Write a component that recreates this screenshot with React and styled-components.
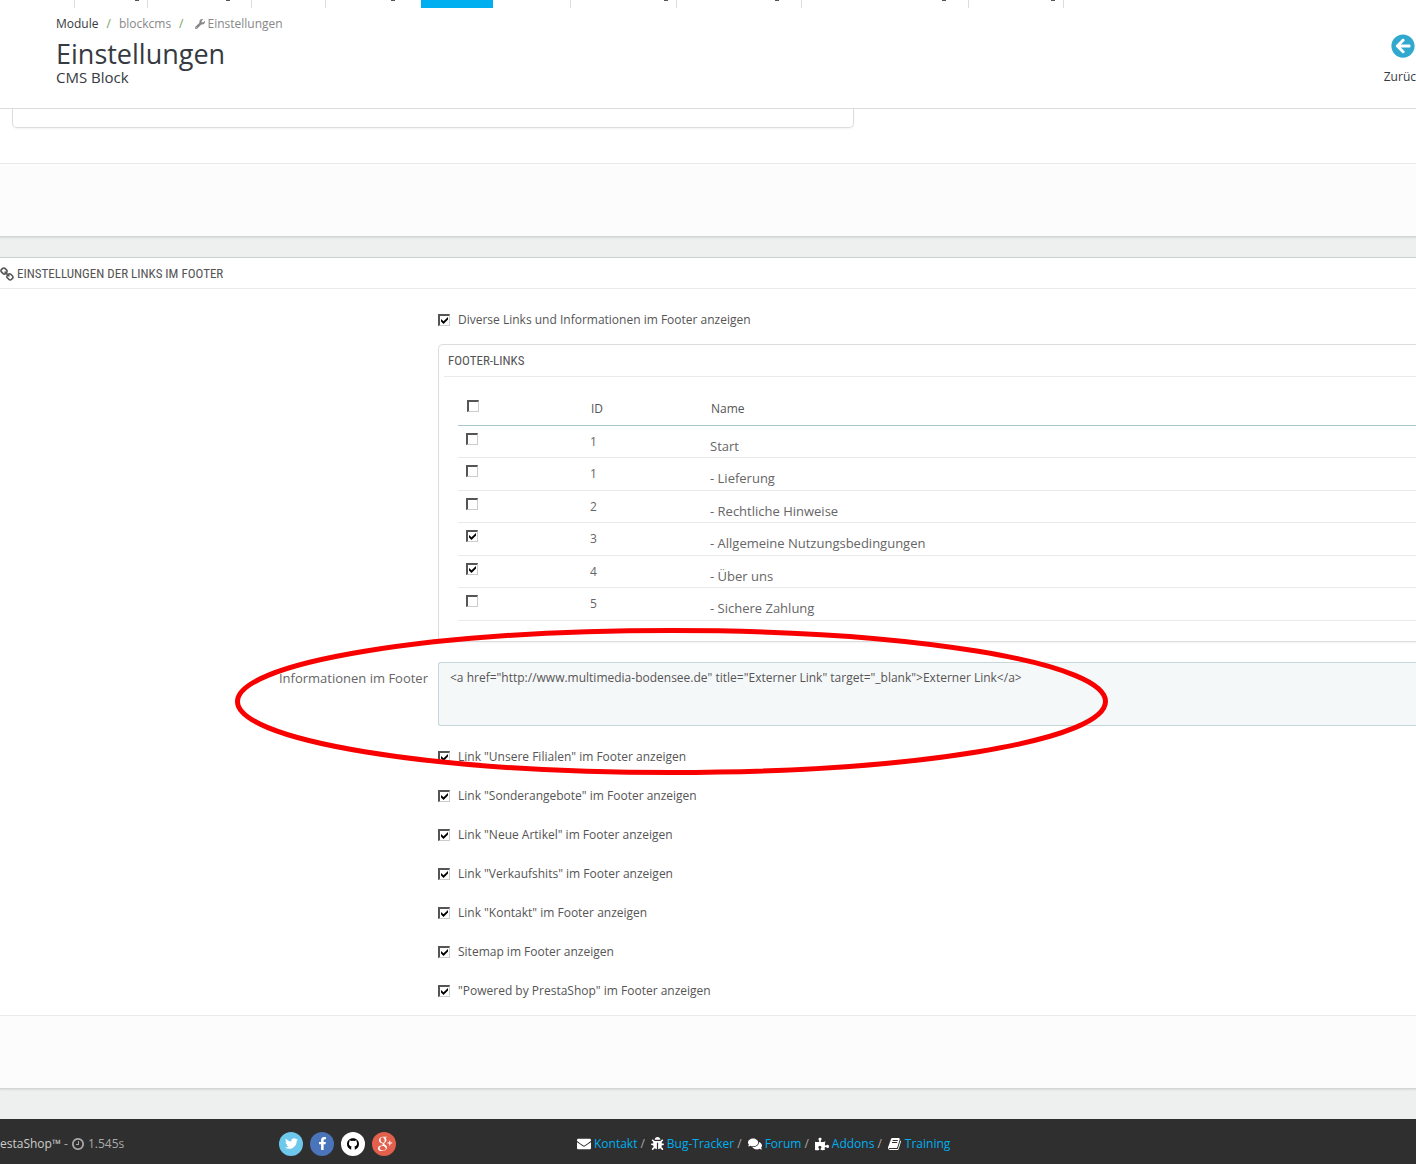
import { useState } from "react";
import styled, { createGlobalStyle } from "styled-components";
import { FaArrowCircleLeft, FaBug, FaComments, FaEnvelope, FaFacebookF, FaPuzzlePiece, FaTwitter, FaWrench } from "react-icons/fa";
import { TiSocialGooglePlus } from "react-icons/ti";

const GlobalStyle = createGlobalStyle`
    * {
        box-sizing: border-box;
    }
    body {
        margin: 0;
        background: #edf0ef;
        color: #555;
        font-family: "Open Sans", "Noto Sans", sans-serif;
        font-size: 12px;
        line-height: 18px;
    }
    a {
        text-decoration: none;
    }
`

const Page = styled.div`
    min-height: 100vh;
    overflow: hidden;
    display: flex;
    flex-direction: column;
`

const Nav = styled.nav`
    display: flex;
    height: 8px;
    background: #fff;
`

const Tab = styled.a`
    display: flex;
    justify-content: flex-end;
    width: ${props => props.$width}px;
    padding-right: ${props => props.$tail}px;
    border-right: ${props => props.$line ? "1px solid #ddd" : "none"};
    background: ${props => props.$active ? "#00aff0" : "#fff"};
    &::after {
        content: "";
        width: 4px;
        height: 1px;
        background: ${props => props.$tail ? "#555" : "transparent"};
    }
`

const Header = styled.header`
    display: flex;
    justify-content: space-between;
    height: 101px;
    padding: 7px 0 0 56px;
    background: #fff;
    border-bottom: 1px solid #ddd;
    color: #363a41;
`

const Breadcrumb = styled.div`
    display: flex;
    align-items: center;
    gap: 8px;
    a {
        display: flex;
        align-items: center;
        gap: 3px;
        color: #888;
    }
    a:first-child {
        color: #363a41;
    }
    a:last-child {
        padding-left: 3px;
    }
    span {
        color: #72a352;
    }
`

const Title = styled.h1`
    margin: 6px 0 0;
    font-size: 27px;
    font-weight: 400;
    line-height: 30px;
`

const SubTitle = styled.h2`
    margin: 0;
    font-size: 15px;
    font-weight: 400;
    line-height: 16px;
`

const BackButton = styled.button`
    display: flex;
    flex-direction: column;
    align-items: flex-end;
    gap: 10px;
    padding: 19px 0 0;
    border: 0;
    background: none;
    color: #363a41;
    font: inherit;
    svg {
        color: #31a9cf;
        margin-right: 1px;
    }
`

const Panel = styled.section`
    background: #fff;
    border-bottom: 1px solid #d0d6d5;
    box-shadow: 0 1px 2px #00000018;
`

const PanelEnd = styled.div`
    height: 73px;
    background: #fcfcfc;
    border-top: 1px solid #eaeaea;
`

const BlockBottom = styled.div`
    width: 842px;
    max-width: 100%;
    height: 19px;
    margin: 0 0 35px 12px;
    border: 1px solid #ddd;
    border-top: 0;
    border-radius: 0 0 5px 5px;
    box-shadow: 0 1px 2px #0000000d;
`

const PanelTitle = styled.h3`
    display: flex;
    align-items: center;
    gap: 2px;
    height: 31px;
    margin: 0;
    padding: 2px 0 0;
    border-bottom: 1px solid #eaeaea;
    font-family: "Ubuntu Condensed", "Roboto Condensed", "Liberation Sans Narrow", sans-serif;
    font-size: 13px;
    font-weight: 400;
    text-transform: uppercase;
`

const LinkPanel = styled(Panel)`
    margin-top: 20px;
    border-top: 1px solid #ccd0d0;
`

const Form = styled.form`
    padding: 22px 0 15px;
`

const Field = styled.div`
    position: relative;
    display: grid;
    grid-template-columns: 428px 1fr;
    column-gap: 10px;
    margin-bottom: 22px;
`

const FieldLabel = styled.label`
    padding-top: 7px;
    font-size: 13px;
    text-align: right;
    color: #666;
`

const CheckList = styled.div`
    display: flex;
    flex-direction: column;
    align-items: flex-start;
    gap: 21px;
    padding-left: 438px;
`

const CheckLabel = styled.label`
    display: flex;
    align-items: center;
    gap: 8px;
`

const Check = styled.input.attrs({ type: "checkbox" })`
    appearance: none;
    display: block;
    width: 12px;
    height: 12px;
    margin: 0;
    background: #fff;
    border: solid;
    border-width: 2px 1px 1px 2px;
    border-color: #555 #ccc #ccc #555;
    &:checked::before {
        content: "";
        display: block;
        width: 7px;
        height: 7px;
        margin: 1px;
        background: #000;
        clip-path: polygon(0 29%, 0 64%, 36% 100%, 100% 36%, 100% 0, 36% 60%);
    }
`

const SubPanel = styled.div`
    margin: 15px 0 20px 438px;
    padding: 0 0 20px 5px;
    border: 1px solid #ddd;
    border-right: 0;
    border-radius: 5px 0 0 5px;
    box-shadow: 0 1px 1px #0000000d;
    ${PanelTitle} {
        height: 32px;
        padding: 0 0 0 4px;
    }
`

const Table = styled.table`
    width: calc(100% - 14px);
    margin: 14px 0 0 14px;
    border-collapse: separate;
    border-spacing: 0;
    table-layout: fixed;
    th, td {
        height: 32px;
        padding: 7px 0 0 8px;
        border-bottom: 1px solid #eaeaea;
        font-weight: 400;
        text-align: left;
        vertical-align: top;
        color: #666;
        line-height: 18px;
    }
    th {
        height: 35px;
        padding: 9px 0 0 9px;
        border-bottom-color: #a9c6cc;
        color: #555;
    }
    tr:nth-child(even) td {
        height: 33px;
    }
    td:nth-child(3) {
        padding-top: 11px;
        font-size: 13px;
    }
`

const IdCol = styled.col`
    width: ${props => props.$width}px;
`

const TextArea = styled.textarea`
    display: block;
    height: 64px;
    padding: 6px 11px;
    border: 1px solid #c7d6db;
    border-right: 0;
    border-radius: 3px 0 0 3px;
    outline: 0;
    resize: none;
    background: #f5f8f9;
    color: #555;
    font: inherit;
`

const Marker = styled.svg`
    position: absolute;
    z-index: 1;
    top: -35px;
    left: 234px;
    pointer-events: none;
`

const Footer = styled.footer`
    display: grid;
    grid-template-columns: 279px 298px 1fr;
    align-items: center;
    height: 45px;
    margin-top: 30px;
    padding-top: 4px;
    background: #2f2f2f;
    color: #aaa;
`

const Version = styled.div`
    display: flex;
    align-items: center;
    gap: 3px;
    a {
        color: #ccc;
    }
`

const Socials = styled.div`
    display: flex;
    gap: 7px;
`

const Social = styled.a`
    display: flex;
    align-items: center;
    justify-content: center;
    width: 24px;
    height: 24px;
    border-radius: 50%;
    background: ${props => props.$bg};
    color: ${props => props.$color || "#fff"};
`

const FooterLinks = styled.div`
    display: flex;
    align-items: center;
    gap: 6px;
    span {
        display: flex;
        align-items: center;
        gap: 3px;
    }
    svg {
        color: #fff;
    }
    a {
        color: #00aff0;
    }
`

// font awesome 4 shapes, the newer sets draw them differently
const ICONS = {
    chain: "M1456 1216q0-40-28-68l-208-208q-28-28-68-28-42 0-72 32 3 3 19 18.5t21.5 21.5 15 19 13 25.5 3.5 27.5q0 40-28 68t-68 28q-15 0-27.5-3.5t-25.5-13-19-15-21.5-21.5-18.5-19q-33 31-33 73 0 40 28 68l206 207q27 27 68 27 40 0 68-26l147-146q28-28 28-67zm-703-705q0-40-28-68l-206-207q-28-28-68-28-39 0-68 27l-147 146q-28 28-28 67 0 40 28 68l208 208q27 27 68 27 42 0 72-31-3-3-19-18.5t-21.5-21.5-15-19-13-25.5-3.5-27.5q0-40 28-68t68-28q15 0 27.5 3.5t25.5 13 19 15 21.5 21.5 18.5 19q33-31 33-73zm895 705q0 120-85 203l-147 146q-83 83-203 83-121 0-204-85l-206-207q-83-83-83-203 0-123 88-209l-88-88q-86 88-208 88-120 0-204-84l-208-208q-84-84-84-204t85-203l147-146q83-83 203-83 121 0 204 85l206 207q83 83 83 203 0 123-88 209l88 88q86-88 208-88 120 0 204 84l208 208q84 84 84 204z",
    clock: "M1024 544v448q0 14-9 23t-23 9h-320q-14 0-23-9t-9-23v-64q0-14 9-23t23-9h224v-352q0-14 9-23t23-9h64q14 0 23 9t9 23zm416 352q0-148-73-273t-198-198-273-73-273 73-198 198-73 273 73 273 198 198 273 73 273-73 198-198 73-273zm224 0q0 209-103 385.5t-279.5 279.5-385.5 103-385.5-103-279.5-279.5-103-385.5 103-385.5 279.5-279.5 385.5-103 385.5 103 279.5 279.5 103 385.5z",
    book: "M1639 478q40 57 18 129l-275 906q-19 64-76.5 107.5t-122.5 43.5h-923q-77 0-148.5-53.5t-99.5-131.5q-24-67-2-127 0-4 3-27t4-37q1-8-3-21.5t-3-19.5q2-11 8-21t16.5-23.5 16.5-23.5q23-38 45-91.5t30-91.5q3-10 .5-30t-.5-28q3-11 17-28t17-23q21-36 42-92t25-90q1-9-2.5-32t.5-28q4-13 22-30.5t22-22.5q19-26 42.5-84.5t27.5-96.5q1-8-3-25.5t-2-26.5q2-8 9-18t18-23 17-21q8-12 16.5-30.5t15-35 16-36 19.5-32 26.5-23.5 36-11.5 47.5 5.5l-1 3q38-9 51-9h761q74 0 114 56t18 130l-274 906q-36 119-71.5 153.5t-128.5 34.5h-869q-27 0-38 15-11 16-1 43 24 70 144 70h923q29 0 56-15.5t35-41.5l300-987q7-22 5-57 38 15 59 43zm-1064 2q-4 13 2 22.5t20 9.5h608q13 0 25.5-9.5t16.5-22.5l21-64q4-13-2-22.5t-20-9.5h-608q-13 0-25.5 9.5t-16.5 22.5zm-83 256q-4 13 2 22.5t20 9.5h608q13 0 25.5-9.5t16.5-22.5l21-64q4-13-2-22.5t-20-9.5h-608q-13 0-25.5 9.5t-16.5 22.5z",
};

function Icon({name, size}){
    return (
        <svg width={size} height={size} viewBox="0 0 1792 1792" fill="currentColor">
            <path d={ICONS[name]} />
        </svg>
    )
}

const tabs = [
    { width: 75, line: true },
    { width: 73, line: true, tail: 8 },
    { width: 104, line: true, tail: 21 },
    { width: 74, line: true },
    { width: 95, tail: 26 },
    { width: 72, active: true },
    { width: 78, line: true },
    { width: 106, line: true, tail: 8 },
    { width: 125, line: true, tail: 22 },
    { width: 167, line: true, tail: 22 },
    { width: 95, line: true, tail: 8 },
];

const pages = [
    { key: "c1", id: 1, name: "Start", checked: false },
    { key: "p1", id: 1, name: "- Lieferung", checked: false },
    { key: "p2", id: 2, name: "- Rechtliche Hinweise", checked: false },
    { key: "p3", id: 3, name: "- Allgemeine Nutzungsbedingungen", checked: true },
    { key: "p4", id: 4, name: "- Über uns", checked: true },
    { key: "p5", id: 5, name: "- Sichere Zahlung", checked: false },
];

const options = [
    'Link "Unsere Filialen" im Footer anzeigen',
    'Link "Sonderangebote" im Footer anzeigen',
    'Link "Neue Artikel" im Footer anzeigen',
    'Link "Verkaufshits" im Footer anzeigen',
    'Link "Kontakt" im Footer anzeigen',
    'Sitemap im Footer anzeigen',
    '"Powered by PrestaShop" im Footer anzeigen',
];

const footerLinks = [
    { name: "Kontakt", icon: <FaEnvelope size={14} /> },
    { name: "Bug-Tracker", icon: <FaBug size={13} /> },
    { name: "Forum", icon: <FaComments size={14} /> },
    { name: "Addons", icon: <FaPuzzlePiece size={14} /> },
    { name: "Training", icon: <Icon name="book" size={14} /> },
];

export default function App(){
    const [rows, setRows] = useState(pages);
    const [info, setInfo] = useState('<a href="http://www.multimedia-bodensee.de" title="Externer Link" target="_blank">Externer Link</a>');

    const toggle = (key) => setRows(rows.map(ele => ele.key === key ? { ...ele, checked: !ele.checked } : ele));
    const toggleAll = (checked) => setRows(rows.map(ele => ({ ...ele, checked })));

    return (
        <Page>
            <GlobalStyle />
            <Nav>
                {tabs.map((tab, idx) => (
                    <Tab key={idx} href="#" $width={tab.width} $line={tab.line} $tail={tab.tail || 0} $active={tab.active} />
                ))}
            </Nav>
            <Header>
                <div>
                    <Breadcrumb>
                        <a href="#">Module</a>
                        <span>/</span>
                        <a href="#">blockcms</a>
                        <span>/</span>
                        <a href="#"><FaWrench size={10} />Einstellungen</a>
                    </Breadcrumb>
                    <Title>Einstellungen</Title>
                    <SubTitle>CMS Block</SubTitle>
                </div>
                <BackButton type="button">
                    <FaArrowCircleLeft size={24} />
                    Zurüc
                </BackButton>
            </Header>
            <Panel>
                <BlockBottom />
                <PanelEnd />
            </Panel>
            <LinkPanel>
                <PanelTitle><Icon name="chain" size={15} />Einstellungen der Links im Footer</PanelTitle>
                <Form>
                    <CheckList>
                        <CheckLabel><Check defaultChecked />Diverse Links und Informationen im Footer anzeigen</CheckLabel>
                    </CheckList>
                    <SubPanel>
                        <PanelTitle>Footer-Links</PanelTitle>
                        <Table>
                            <colgroup>
                                <IdCol $width={124} />
                                <IdCol $width={120} />
                                <col />
                            </colgroup>
                            <thead>
                                <tr>
                                    <th><Check aria-label="Alle" checked={rows.every(ele => ele.checked)} onChange={(e) => toggleAll(e.target.checked)} /></th>
                                    <th>ID</th>
                                    <th>Name</th>
                                </tr>
                            </thead>
                            <tbody>
                                {rows.map(ele => (
                                    <tr key={ele.key}>
                                        <td><Check id={ele.key} checked={ele.checked} onChange={() => toggle(ele.key)} /></td>
                                        <td>{ele.id}</td>
                                        <td><label htmlFor={ele.key}>{ele.name}</label></td>
                                    </tr>
                                ))}
                            </tbody>
                        </Table>
                    </SubPanel>
                    <Field>
                        <FieldLabel htmlFor="info">Informationen im Footer</FieldLabel>
                        <TextArea id="info" spellCheck={false} value={info} onChange={(e) => setInfo(e.target.value)} />
                        <Marker width="876" height="150" viewBox="0 0 876 150">
                            <ellipse cx="437.5" cy="74.5" rx="434" ry="71" fill="none" stroke="#f80000" strokeWidth="5" />
                        </Marker>
                    </Field>
                    <CheckList>
                        {options.map(name => (
                            <CheckLabel key={name}><Check defaultChecked />{name}</CheckLabel>
                        ))}
                    </CheckList>
                </Form>
                <PanelEnd />
            </LinkPanel>
            <Footer>
                <Version><a href="#">estaShop™</a> - <Icon name="clock" size={14} />1.545s</Version>
                <Socials>
                    <Social href="#" aria-label="Twitter" $bg="#6dc8ec"><FaTwitter size={13} /></Social>
                    <Social href="#" aria-label="Facebook" $bg="#4b75ba"><FaFacebookF size={13} /></Social>
                    <Social href="#" aria-label="Github" $bg="#fff" $color="#000">
                        <svg width="12" height="12" viewBox="0 0 12 12" fill="currentColor">
                            <path d="M4.2 11.8C1.6 11 0 8.9 0 6.1 0 2.8 2.6.2 6 .2s6 2.6 6 5.9c0 2.8-1.6 4.9-4.2 5.7V9.6c0-.6-.2-1-.5-1.2 1.7-.2 2.8-1 2.8-2.9 0-.7-.2-1.2-.6-1.7.1-.5.1-1-.1-1.5-.6 0-1.1.2-1.7.6a6 6 0 0 0-3.4 0c-.6-.4-1.1-.6-1.7-.6-.2.5-.2 1-.1 1.5-.4.5-.6 1-.6 1.7 0 1.9 1.1 2.7 2.8 2.9-.3.2-.5.6-.5 1.2z" />
                        </svg>
                    </Social>
                    <Social href="#" aria-label="Google Plus" $bg="#e2604c"><TiSocialGooglePlus size={23} /></Social>
                </Socials>
                <FooterLinks>
                    {footerLinks.map((link, idx) => (
                        <span key={link.name}>
                            {link.icon}
                            <a href="#">{link.name}</a>
                            {idx < footerLinks.length - 1 && "/"}
                        </span>
                    ))}
                </FooterLinks>
            </Footer>
        </Page>
    )
}
